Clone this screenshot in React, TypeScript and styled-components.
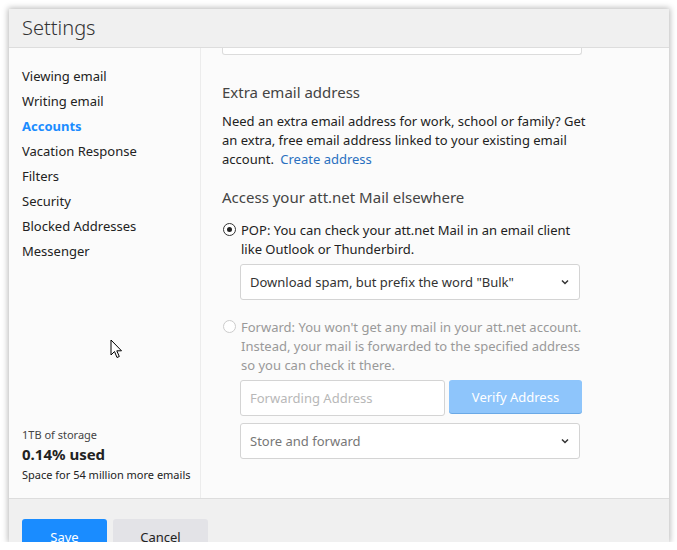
import * as React from "react";
import styled, {createGlobalStyle} from "styled-components";

const GlobalStyle = createGlobalStyle`
  html, body {
    margin: 0;
    padding: 0;
    background: #ffffff;
    font-family: "Noto Sans", "Open Sans", sans-serif;
  }
`

const MENU = [
    "Viewing email",
    "Writing email",
    "Accounts",
    "Vacation Response",
    "Filters",
    "Security",
    "Blocked Addresses",
    "Messenger",
]

function Chevron() {
    return (
        <svg width="10" height="10" viewBox="0 0 10 10">
            <path d="M2 3.5 L5 6.5 L8 3.5" fill="none" stroke="#333" strokeWidth="1.5"/>
        </svg>
    )
}

function Cursor() {
    return (
        <CursorWrap>
            <svg width="14" height="21" viewBox="0 0 14 21">
                <path d="M1 1 L1 16 L4.5 12.5 L7 18.5 L9.3 17.5 L6.8 11.8 L11.5 11.8 Z"
                      fill="#fff" stroke="#000" strokeWidth="1" strokeLinejoin="miter"/>
            </svg>
        </CursorWrap>
    )
}

export default function App() {
    return (
        <>
            <GlobalStyle/>
            <Dialog>
                <Header>Settings</Header>
                <Body>
                    <Sidebar>
                        <Menu>
                            {MENU.map(item => (
                                <MenuItem key={item} $active={item === "Accounts"}>{item}</MenuItem>
                            ))}
                        </Menu>
                        <Storage>
                            <StorageSmall>1TB of storage</StorageSmall>
                            <StorageBig>0.14% used</StorageBig>
                            <StorageSmall $dark>Space for 54 million more emails</StorageSmall>
                        </Storage>
                        <Cursor/>
                    </Sidebar>
                    <Content>
                        <ScrolledField/>
                        <SectionTitle $top={27}>Extra email address</SectionTitle>
                        <Paragraph>
                            Need an extra email address for work, school or family? Get an extra, free email
                            address linked to your existing email account.{" "}<Link>Create address</Link>
                        </Paragraph>
                        <SectionTitle $top={18}>Access your att.net Mail elsewhere</SectionTitle>
                        <RadioRow $top={14}>
                            <Radio $checked/>
                            <RadioText>POP: You can check your att.net Mail in an email client like Outlook or Thunderbird.</RadioText>
                        </RadioRow>
                        <Indented>
                            <Select>
                                <span>Download spam, but prefix the word "Bulk"</span>
                                <Chevron/>
                            </Select>
                        </Indented>
                        <RadioRow $top={18} $disabled>
                            <Radio/>
                            <RadioText>Forward: You won't get any mail in your att.net account. Instead, your mail is forwarded to the specified address so you can check it there.</RadioText>
                        </RadioRow>
                        <Indented>
                            <FieldRow>
                                <Input>Forwarding Address</Input>
                                <VerifyButton>Verify Address</VerifyButton>
                            </FieldRow>
                            <Select $disabled>
                                <span>Store and forward</span>
                                <Chevron/>
                            </Select>
                        </Indented>
                    </Content>
                </Body>
                <Footer>
                    <SaveButton>Save</SaveButton>
                    <CancelButton>Cancel</CancelButton>
                </Footer>
            </Dialog>
        </>
    )
}

const Dialog = styled.div`
  margin: 9px 0 0 9px;
  width: 660px;
  height: 533px;
  display: flex;
  flex-direction: column;
  overflow: hidden;
  background: #f0f0f0;
  box-shadow: 0 0 6px 1px rgba(0, 0, 0, 0.28);
`

const Header = styled.div`
  height: 36px;
  flex-shrink: 0;
  display: flex;
  align-items: center;
  padding: 0 0 2px 13px;
  font-size: 20px;
  font-weight: 300;
  color: #333;
  border-bottom: 1px solid #dddddd;
`

const Body = styled.div`
  height: 450px;
  flex-shrink: 0;
  display: flex;
  background: #fbfbfb;
  border-bottom: 1px solid #dddddd;
`

const Sidebar = styled.div`
  position: relative;
  width: 178px;
  padding: 16px 0 14px 13px;
  border-right: 1px solid #ececec;
  display: flex;
  flex-direction: column;
  justify-content: space-between;
`

const Menu = styled.div`
  display: flex;
  flex-direction: column;
`

const MenuItem = styled.div<{ $active?: boolean }>`
  font-size: 13px;
  line-height: 25px;
  color: ${p => p.$active ? "#1a8cff" : "#222"};
  font-weight: ${p => p.$active ? 700 : 400};
`

const Storage = styled.div`
  display: flex;
  flex-direction: column;
`

const StorageSmall = styled.div<{ $dark?: boolean }>`
  font-size: 11px;
  line-height: 19px;
  color: ${p => p.$dark ? "#222" : "#444"};
`

const StorageBig = styled.div`
  font-size: 15px;
  font-weight: 700;
  line-height: 21px;
  color: #222;
`

const CursorWrap = styled.div`
  position: absolute;
  left: 101px;
  top: 291px;
  line-height: 0;
`

const Content = styled.div`
  flex: 1;
  padding-left: 21px;
  display: flex;
  flex-direction: column;
  align-items: flex-start;
`

const ScrolledField = styled.div`
  width: 358px;
  height: 6px;
  border: 1px solid #dcdcdc;
  border-top: none;
  border-radius: 0 0 3px 3px;
  background: #fff;
`

const SectionTitle = styled.div<{ $top: number }>`
  margin-top: ${p => p.$top}px;
  font-size: 15px;
  line-height: 20px;
  color: #444;
`

const Paragraph = styled.p`
  margin: 10px 0 0;
  width: 372px;
  font-size: 13px;
  line-height: 19px;
  color: #222;
`

const Link = styled.span`
  color: #2a70c0;
  padding-left: 3px;
`

const RadioRow = styled.div<{ $top: number; $disabled?: boolean }>`
  margin-top: ${p => p.$top}px;
  display: flex;
  align-items: flex-start;
  gap: 5px;
  color: ${p => p.$disabled ? "#999" : "#222"};
`

const Radio = styled.span<{ $checked?: boolean }>`
  margin: 2px 0 0 1px;
  width: 11px;
  height: 11px;
  border-radius: 50%;
  border: 1px solid ${p => p.$checked ? "#333" : "#ccc"};
  background: #fff;
  flex-shrink: 0;
  position: relative;

  &::after {
    content: "";
    display: ${p => p.$checked ? "block" : "none"};
    position: absolute;
    left: 3px;
    top: 3px;
    width: 5px;
    height: 5px;
    border-radius: 50%;
    background: #222;
  }
`

const RadioText = styled.div`
  width: 350px;
  font-size: 13px;
  line-height: 19px;
`

const Indented = styled.div`
  margin-top: 5px;
  padding-left: 18px;
  display: flex;
  flex-direction: column;
  gap: 7px;
`

const Select = styled.div<{ $disabled?: boolean }>`
  box-sizing: border-box;
  width: 340px;
  height: 36px;
  padding: 0 9px 0 9px;
  border: 1px solid #d4d4d4;
  border-radius: 3px;
  background: #fff;
  display: flex;
  align-items: center;
  justify-content: space-between;
  font-size: 13px;
  color: ${p => p.$disabled ? "#777" : "#333"};
`

const FieldRow = styled.div`
  display: flex;
  align-items: flex-start;
  gap: 4px;
`

const Input = styled.div`
  box-sizing: border-box;
  width: 205px;
  height: 36px;
  padding-left: 9px;
  border: 1px solid #d4d4d4;
  border-radius: 3px;
  background: #fff;
  display: flex;
  align-items: center;
  font-size: 13px;
  color: #b8b8b8;
`

const VerifyButton = styled.div`
  width: 133px;
  height: 33px;
  border-radius: 3px;
  background: #8ec5fb;
  box-shadow: 0 1px 0 #6aa9e6;
  display: flex;
  align-items: center;
  justify-content: center;
  font-size: 13px;
  color: #fff;
`

const Footer = styled.div`
  flex: 1;
  display: flex;
  gap: 6px;
  padding: 20px 0 0 13px;
`

const BaseButton = styled.div`
  height: 36px;
  border-radius: 3px;
  display: flex;
  align-items: center;
  justify-content: center;
  font-size: 13px;
`

const SaveButton = styled(BaseButton)`
  width: 85px;
  background: #1a8cff;
  color: #fff;
`

const CancelButton = styled(BaseButton)`
  width: 95px;
  background: #e3e3e7;
  color: #222;
`
